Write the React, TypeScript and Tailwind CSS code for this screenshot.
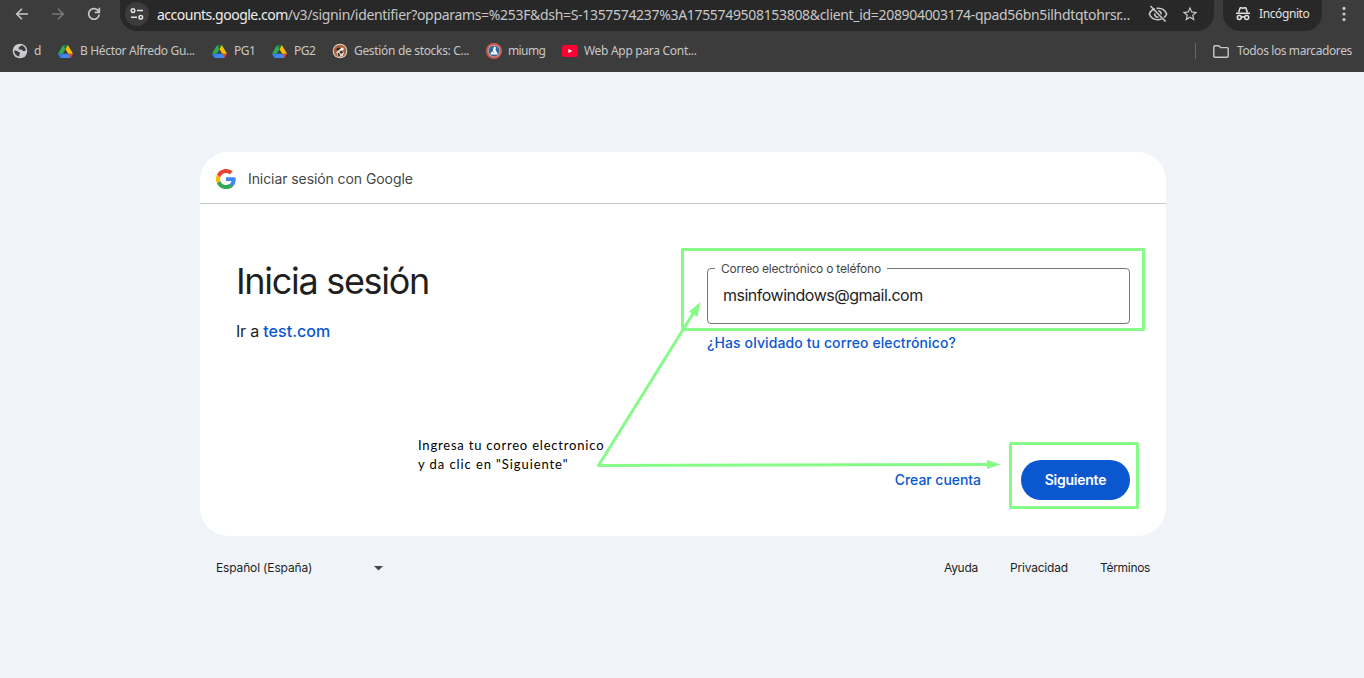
import React from "react";

type IconProps = { className?: string };

const BackIcon = ({ className }: IconProps) => (
  <svg viewBox="0 0 16 16" className={className} fill="none" stroke="currentColor" strokeWidth="1.6">
    <path d="M14 8H3M8 2.7 2.7 8 8 13.3" />
  </svg>
);

const ForwardIcon = ({ className }: IconProps) => (
  <svg viewBox="0 0 16 16" className={className} fill="none" stroke="currentColor" strokeWidth="1.6">
    <path d="M2 8h11M8 2.7 13.3 8 8 13.3" />
  </svg>
);

const ReloadIcon = ({ className }: IconProps) => (
  <svg viewBox="0 0 16 16" className={className} fill="none" stroke="currentColor" strokeWidth="1.7">
    <path d="M13.2 8.6A5.3 5.3 0 1 1 11.8 4.3L13.4 6" />
    <path d="M13.3 1.8v4.6H8.8" />
  </svg>
);

const TuneIcon = ({ className }: IconProps) => (
  <svg viewBox="0 0 14 14" className={className} fill="none" stroke="currentColor" strokeWidth="1.5">
    <circle cx="3" cy="3.6" r="1.8" />
    <path d="M7 3.6h6M1 10.2h6" />
    <circle cx="10.8" cy="10.2" r="1.8" />
  </svg>
);

const EyeOffIcon = ({ className }: IconProps) => (
  <svg viewBox="0 0 20 18" className={className} fill="none" stroke="currentColor" strokeWidth="1.6">
    <path d="M6.8 3.8C3.800 4.900 2 7.200 1.300 9c1.500 3.600 4.900 5.700 8.700 5.700 1.200 0 2.400-.2 3.500-.6M8.600 3.400C13 2.900 17 5 18.700 9c-.6 1.400-1.500 2.600-2.700 3.600" />
    <path d="M10.200 5.800A3.300 3.300 0 0 1 13.200 9.400M6.700 8.500A3.300 3.300 0 0 0 10.600 12.200" />
    <path d="M2.500 1 17.500 16.500" />
  </svg>
);

const StarIcon = ({ className }: IconProps) => (
  <svg viewBox="0 0 24 24" className={className} fill="currentColor">
    <path d="m22 9.240-7.190-.62L12 2 9.190 8.630 2 9.240l5.460 4.730L5.820 21 12 17.270 18.180 21l-1.630-7.030L22 9.240zM12 15.400l-3.760 2.270 1-4.280-3.320-2.880 4.380-.38L12 6.100l1.710 4.040 4.380.38-3.320 2.880 1 4.280L12 15.400z" />
  </svg>
);

const IncognitoIcon = ({ className }: IconProps) => (
  <svg viewBox="0 0 16 14" className={className} fill="none" stroke="currentColor" strokeWidth="1.5">
    <path d="M3.600 5.500 5 1.200c.2-.4.5-.5.900-.4L8 1.300l2.100-.5c.4-.1.700 0 .9.400l1.400 4.300" />
    <path d="M1 6.300h14" />
    <circle cx="4.300" cy="10.600" r="2" />
    <circle cx="11.700" cy="10.600" r="2" />
    <path d="M6.300 10.300c1-.6 2.400-.6 3.400 0" />
  </svg>
);

const DotsIcon = ({ className }: IconProps) => (
  <svg viewBox="0 0 4 16" className={className} fill="currentColor">
    <circle cx="2" cy="2.400" r="1.600" />
    <circle cx="2" cy="8" r="1.600" />
    <circle cx="2" cy="13.600" r="1.600" />
  </svg>
);

const GlobeIcon = ({ className }: IconProps) => (
  <svg viewBox="0 0 16 16" className={className}>
    <circle cx="8" cy="8" r="7.300" fill="#c9cbce" />
    <path d="M2.200 7.600c1.600 0 2.900.2 3.700 1 .7.8 2.100.5 2.100 1.600 0 .900-.7 1-.7 1.900 0 .6.200 1 .2 1.500C4.500 13.300 2 11 2.200 7.600ZM8.200 3.200c.9-.6 2.300-.8 3-.3 1.700 1.100 2.600 2.900 2.600 4.800-1-.2-1.700.6-2.700.3-.9-.3-.9-1.300-2-1.400-1-.1-2.400 0-2.500-1.200-.1-1.100.700-1.600 1.600-2.200Z" fill="#3c3c3c" />
  </svg>
);

const DriveIcon = ({ className }: IconProps) => (
  <svg viewBox="0 0 87.300 78" className={className}>
    <path d="m6.600 66.850 3.850 6.650c.8 1.400 1.950 2.500 3.300 3.300l13.750-23.800h-27.500c0 1.550.4 3.100 1.200 4.500z" fill="#2684fc" />
    <path d="m43.650 25-13.750-23.800c-1.350.8-2.500 1.900-3.300 3.300l-25.400 44a9.060 9.060 0 0 0 -1.200 4.500h27.500z" fill="#34a853" />
    <path d="m73.550 76.800c1.350-.8 2.500-1.900 3.300-3.300l1.600-2.750 7.650-13.250c.8-1.400 1.200-2.950 1.200-4.500h-27.502l5.852 11.500z" fill="#ea4335" />
    <path d="m43.650 25 13.750-23.800c-1.350-.8-2.900-1.200-4.500-1.200h-18.500c-1.600 0-3.150.45-4.500 1.200z" fill="#188038" />
    <path d="m59.800 53h-32.300l-13.750 23.800c1.350.8 2.900 1.200 4.500 1.200h50.800c1.600 0 3.150-.45 4.500-1.200z" fill="#4285f4" />
    <path d="m73.400 26.500-12.700-22c-.8-1.400-1.950-2.500-3.300-3.300l-13.750 23.800 16.150 28h27.450c0-1.550-.4-3.100-1.200-4.500z" fill="#fbbc04" />
  </svg>
);

const StocksIcon = ({ className }: IconProps) => (
  <svg viewBox="0 0 16 16" className={className}>
    <circle cx="8" cy="8" r="7.300" fill="#e6d6c8" />
    <circle cx="8" cy="8" r="6.300" fill="#a4623f" />
    <path d="M4.300 9.200 8 5.800l4 3.400-1.400 4.400H5.700Z" fill="#e6d6c8" />
    <path d="M3.800 6.600 6.400 4.600l2 1-2.400 2ZM7.500 8.800 10 7.600l1 2.200-2 1ZM5.500 10.400l1.600-.6 1 2.600-1.500 1Z" fill="#292421" />
    <circle cx="10.200" cy="6" r="1.500" fill="#fff" />
  </svg>
);

const MiumgIcon = ({ className }: IconProps) => (
  <svg viewBox="0 0 16 16" className={className}>
    <circle cx="8" cy="8" r="8" fill="#cf5c50" />
    <circle cx="8" cy="8" r="6" fill="#e3c5bf" />
    <circle cx="8" cy="8" r="5.500" fill="#2a6a9c" />
    <path d="M8.400 3.200 10 4.600l-.6 2.200 1.400 2.400 1.200 2.300H4.300l1-2.500 1.700-.7.200-2.800Z" fill="#fff" />
    <path d="m7.600 8.200 1.100 1.800H6.700Z" fill="#8fb3cc" />
  </svg>
);

const YoutubeIcon = ({ className }: IconProps) => (
  <svg viewBox="0 0 16 12" className={className}>
    <rect width="16" height="12" rx="2.600" fill="#ff0033" />
    <path d="M6.400 3.900 10.400 6l-4 2.100Z" fill="#fff" />
  </svg>
);

const FolderIcon = ({ className }: IconProps) => (
  <svg viewBox="0 0 16 13" className={className} fill="none" stroke="currentColor" strokeWidth="1.400" strokeLinejoin="round">
    <path d="M.8 11.200V1.800c0-.5.400-1 1-1h4l1.700 1.800h6.700c.6 0 1 .5 1 1v7.600c0 .6-.4 1-1 1H1.800c-.6 0-1-.4-1-1Z" />
  </svg>
);

const GoogleLogo = ({ className }: IconProps) => (
  <svg viewBox="0 0 48 48" className={className}>
    <path fill="#4285F4" d="M45.120 24.500c0-1.560-.14-3.060-.4-4.500H24v8.510h11.840c-.51 2.750-2.060 5.080-4.390 6.640v5.520h7.110c4.160-3.830 6.560-9.470 6.560-16.170z" />
    <path fill="#34A853" d="M24 46c5.940 0 10.920-1.970 14.560-5.330l-7.110-5.520c-1.970 1.320-4.490 2.100-7.450 2.100-5.730 0-10.580-3.870-12.310-9.070H4.340v5.700C7.960 41.070 15.400 46 24 46z" />
    <path fill="#FBBC05" d="M11.690 28.180C11.250 26.860 11 25.450 11 24s.25-2.860.69-4.180v-5.700H4.340C2.850 17.090 2 20.450 2 24s.85 6.910 2.340 9.880l7.350-5.700z" />
    <path fill="#EA4335" d="M24 10.750c3.230 0 6.130 1.110 8.410 3.290l6.310-6.310C34.910 4.180 29.930 2 24 2 15.400 2 7.960 6.930 4.340 14.120l7.350 5.700c1.730-5.200 6.580-9.070 12.310-9.070z" />
  </svg>
);

const bookmarks = [
  { label: "d", Icon: GlobeIcon, item: "w-[46px]", icon: "h-4 w-4", gap: "gap-1.5", text: "tracking-normal" },
  { label: "B Héctor Alfredo Gu...", Icon: DriveIcon, item: "w-[154px]", icon: "h-[13px] w-[15px]", gap: "gap-[7px]", text: "tracking-[-0.33px]" },
  { label: "PG1", Icon: DriveIcon, item: "w-[60px]", icon: "h-[13px] w-[15px]", gap: "gap-[7px]", text: "tracking-[-0.5px]" },
  { label: "PG2", Icon: DriveIcon, item: "w-[60px]", icon: "h-[13px] w-[15px]", gap: "gap-[7px]", text: "tracking-[-0.5px]" },
  { label: "Gestión de stocks: C...", Icon: StocksIcon, item: "w-[154px]", icon: "h-4 w-4", gap: "gap-1.5", text: "tracking-[-0.32px]" },
  { label: "miumg", Icon: MiumgIcon, item: "w-[76px]", icon: "h-4 w-4", gap: "gap-1.5", text: "tracking-[-0.6px]" },
  { label: "Web App para Cont...", Icon: YoutubeIcon, item: "w-[150px]", icon: "h-3 w-4", gap: "gap-1.5", text: "tracking-[-0.3px]" },
];

function Browser() {
  return (
    <header className="h-[72px] bg-[#3c3c3c] font-['Noto_Sans',sans-serif] whitespace-nowrap text-[#c7c7c7]">
      <div className="flex h-[31px]">
        <div className="flex h-7 w-[120px] shrink-0 items-center pl-3.5">
          <BackIcon className="h-4 w-4" />
          <ForwardIcon className="ml-5 h-4 w-4 text-[#777777]" />
          <ReloadIcon className="ml-5 h-4 w-4" />
        </div>
        <div className="flex h-[31px] w-[1094px] shrink-0 items-center rounded-b-[17px] bg-[#282828] pb-[3px]">
          <span className="ml-[5px] flex h-6 w-6 items-center justify-center rounded-full bg-[#3c3c3c]">
            <TuneIcon className="h-3.5 w-3.5 text-[#e3e3e3]" />
          </span>
          <span className="ml-2 w-[991px] text-[14px] tracking-[-0.32px]">
            <span className="tracking-[-0.5px] text-[#eeeeee]">accounts.google.com</span>
            /v3/signin/identifier?opparams=%253F&amp;dsh=S-1357574237%3A1755749508153808&amp;client_id=208904003174-qpad56bn5ilhdtqtohrsr...
          </span>
          <EyeOffIcon className="h-[18px] w-5" />
          <StarIcon className="ml-[13px] h-[18px] w-[18px]" />
        </div>
        <div className="ml-[9px] flex h-[31px] w-[99px] shrink-0 items-center rounded-b-[17px] bg-[#282828] pb-[3px] pl-3 text-[#e3e3e3]">
          <IncognitoIcon className="h-3.5 w-4" />
          <span className="ml-2 text-[12px] tracking-[-0.4px]">Incógnito</span>
        </div>
        <div className="flex h-7 items-center pl-5">
          <DotsIcon className="h-4 w-1" />
        </div>
      </div>
      <nav className="flex h-10 items-center text-[12px]">
        <div className="flex flex-1 items-center pl-3">
          {bookmarks.map(({ label, Icon, item, icon, gap, text }) => (
            <a key={label} className={`flex shrink-0 items-center ${item} ${gap}`}>
              <Icon className={`shrink-0 ${icon}`} />
              <span className={text}>{label}</span>
            </a>
          ))}
        </div>
        <span className="h-4 w-px bg-[#666666]" />
        <FolderIcon className="ml-[17px] h-[13px] w-4" />
        <span className="ml-2 w-[127px] tracking-[-0.4px]">Todos los marcadores</span>
      </nav>
    </header>
  );
}

function SignInCard() {
  return (
    <section className="mx-auto h-[384px] w-[966px] rounded-[28px] bg-white">
      <div className="flex h-[52px] items-center border-b border-[#c4c7c5] pl-[15px] pt-[2px]">
        <GoogleLogo className="h-[22px] w-[22px]" />
        <span className="ml-[11px] text-[14px] leading-5 tracking-[-0.08px] text-[#444746]">Iniciar sesión con Google</span>
      </div>
      <div className="flex">
        <div className="w-[507px] shrink-0 pl-9 pt-[55px]">
          <h1 className="text-[36px] leading-[44px] tracking-[-1.3px]">Inicia sesión</h1>
          <p className="mt-4 text-[16px] leading-6 tracking-[-0.2px]">
            Ir a <a className="font-medium tracking-[0.02px] text-[#0b57d0]">test.com</a>
          </p>
        </div>
        <div className="w-[423px] pt-16">
          <div className="relative h-14 rounded border border-[#747775] pl-[15px] pt-[14px]">
            <label className="absolute -top-2 left-[7px] h-4 w-[172px] bg-white pl-1.5 text-[12px] leading-4 tracking-[-0.21px] text-[#444746]">
              Correo electrónico o teléfono
            </label>
            <span className="block text-[16px] leading-6 tracking-[-0.49px]">msinfowindows@gmail.com</span>
          </div>
          <a className="mt-[9px] block text-[14px] leading-5 font-medium tracking-[0.11px] text-[#0b57d0]">¿Has olvidado tu correo electrónico?</a>
          <div className="mt-[107px] flex items-center justify-end">
            <a className="mr-10 text-[14px] leading-5 font-medium tracking-[-0.05px] text-[#0b57d0]">Crear cuenta</a>
            <button className="h-10 w-[109px] rounded-full bg-[#0b57d0] text-[14px] leading-5 font-semibold tracking-[-0.25px] text-white">Siguiente</button>
          </div>
        </div>
      </div>
    </section>
  );
}

function Annotations() {
  return (
    <>
      <svg className="pointer-events-none absolute inset-0 h-[678px] w-[1364px]" viewBox="0 0 1364 678">
        <g fill="none" stroke="#87fb87" strokeWidth="3" strokeLinejoin="round">
          <rect x="682.500" y="249.500" width="461" height="80" />
          <rect x="1010.500" y="443.500" width="127" height="64" />
          <path d="M694 312 598.500 465.500 988 464.500" />
        </g>
        <path d="M700.500 302 697.500 317 689 311.500ZM1001 464.500 987 460v9Z" fill="#87fb87" />
      </svg>
      <p className="absolute left-[418px] top-[436px] font-[Lato,sans-serif] text-[13px] leading-[19px] tracking-[0.8px] whitespace-nowrap text-black">
        Ingresa tu correo electronico
        <br />
        <span className="tracking-[0.92px]">y da clic en &quot;Siguiente&quot;</span>
      </p>
    </>
  );
}

export default function App() {
  return (
    <div className="relative h-[678px] w-[1364px] overflow-hidden bg-[#f0f4f9] font-['Inter',sans-serif] text-[#1f1f1f]">
      <Browser />
      <main className="pl-[2px] pt-20 whitespace-nowrap">
        <SignInCard />
        <footer className="mx-auto mt-[22px] flex h-5 w-[966px] items-center px-4 text-[12px] tracking-[-0.15px]">
          <span className="w-[158px]">Español (España)</span>
          <svg viewBox="0 0 10 5" className="h-[5px] w-2.5" fill="#444746">
            <path d="M0 0h9L4.500 4.500Z" />
          </svg>
          <div className="ml-auto flex">
            <a className="w-[66px] tracking-[-0.3px]">Ayuda</a>
            <a className="w-[90px] tracking-[-0.2px]">Privacidad</a>
            <a className="w-[50px] tracking-[-0.3px]">Términos</a>
          </div>
        </footer>
      </main>
      <Annotations />
    </div>
  );
}
